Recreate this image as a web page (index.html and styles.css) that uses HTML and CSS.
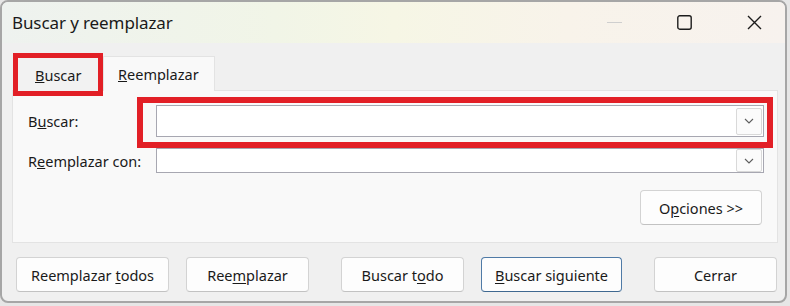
FILE: index.html
```html
<!DOCTYPE html>
<html lang="es">
<head>
  <meta charset="UTF-8">
  <title>Buscar y reemplazar</title>
  <link rel="stylesheet" href="styles.css">
</head>
<body>
  <div class="window">
    <div class="titlebar">
      <span class="title">Buscar y reemplazar</span>
      <div class="controls">
        <svg class="ctl" viewBox="0 0 15 15"><path d="M0 7.5 H15" stroke="#cfcfcf" stroke-width="1.2"/></svg>
        <svg class="ctl" viewBox="0 0 15 15"><rect x="0.8" y="0.8" width="13.4" height="13.4" rx="2" fill="none" stroke="#1c1c1c" stroke-width="1.4"/></svg>
        <svg class="ctl" viewBox="0 0 15 15"><path d="M1 1 L14 14 M14 1 L1 14" stroke="#1c1c1c" stroke-width="1.4"/></svg>
      </div>
    </div>

    <div class="content">
      <div class="tabs">
        <div class="tab tab-marked"><u>B</u>uscar</div>
        <div class="tab tab-active"><u>R</u>eemplazar</div>
      </div>

      <div class="panel">
        <div class="mark mark-find"></div>

        <div class="row row-find">
          <label class="label">B<u>u</u>scar:</label>
          <div class="combo">
            <span class="combo-btn">
              <svg viewBox="0 0 10 6"><path d="M1 1 L5 5 L9 1" fill="none" stroke="#5f5f5f" stroke-width="1.1"/></svg>
            </span>
          </div>
        </div>

        <div class="row row-replace">
          <label class="label">R<u>e</u>emplazar con:</label>
          <div class="combo combo-small">
            <span class="combo-btn">
              <svg viewBox="0 0 10 6"><path d="M1 1 L5 5 L9 1" fill="none" stroke="#5f5f5f" stroke-width="1.1"/></svg>
            </span>
          </div>
        </div>

        <div class="options-row">
          <button class="btn btn-options">O<u>p</u>ciones &gt;&gt;</button>
        </div>
      </div>

      <div class="actions">
        <button class="btn btn-wide">Reemplazar <u>t</u>odos</button>
        <button class="btn">Ree<u>m</u>plazar</button>
        <button class="btn btn-far">Buscar t<u>o</u>do</button>
        <button class="btn btn-default"><u>B</u>uscar siguiente</button>
        <button class="btn btn-far">Cerrar</button>
      </div>
    </div>
  </div>
</body>
</html>
```

FILE: styles.css
```css
body {
  margin: 0;
  background-color: #e6e6e6;
  font-family: "Noto Sans", "Open Sans", sans-serif;
  color: #1a1a1a;
}

.window {
  box-sizing: border-box;
  width: 787px;
  height: 303px;
  border: 2px solid #a6a6a6;
  border-radius: 8px;
  overflow: hidden;
  background-color: #f0f0f0;
}

/* barra de titulo */
.titlebar {
  height: 41px;
  display: flex;
  align-items: center;
  justify-content: space-between;
  padding-left: 10px;
  background: linear-gradient(90deg, #eef2ef 0%, #f1f5e7 35%, #f6f6e5 50%, #f8f3ea 72%, #f7f2ee 100%);
}
.title {
  font-size: 17px;
  letter-spacing: -0.1px;
}
.controls {
  display: flex;
  align-items: center;
  padding-right: 23px;
}
.ctl {
  width: 15px;
  height: 15px;
  margin-left: 55px;
}

.content {
  padding-top: 13px;
  font-size: 14.5px;
}

/* pestañas */
.tabs {
  display: flex;
  align-items: flex-end;
  padding-left: 16px;
  position: relative;
  z-index: 2;
  margin-bottom: -1px;
}
.tab {
  box-sizing: border-box;
  display: flex;
  align-items: center;
}
.tab-marked {
  width: 80px;
  height: 33px;
  padding-left: 17px;
  background-color: #f2f2f2;
  outline: 5px solid #e21f26;
  margin-right: 5px;
}
.tab-active {
  width: 112px;
  height: 35px;
  padding-left: 14px;
  background-color: #f9f9f9;
  border: 1px solid #e3e3e3;
  border-bottom: none;
}

.panel {
  position: relative;
  box-sizing: border-box;
  width: 766px;
  height: 153px;
  margin-left: 10px;
  padding: 14px 13px 0 15px;
  background-color: #f9f9f9;
  border: 1px solid #e3e3e3;
}

/* recuadro rojo de anotacion */
.mark {
  position: absolute;
  box-sizing: border-box;
  border: 6px solid #e21f26;
}
.mark-find {
  left: 124px;
  top: 6px;
  width: 636px;
  height: 51px;
}

.row {
  display: flex;
  align-items: center;
}
.row-replace {
  margin-top: 11px;
}
.label {
  width: 128px;
}
.combo {
  position: relative;
  box-sizing: border-box;
  flex: 1;
  height: 32px;
  background-color: #fff;
  border: 1px solid #a7a7b1;
  display: flex;
  justify-content: flex-end;
  align-items: center;
  padding-right: 1px;
}
.combo-small {
  height: 25px;
}
.combo-btn {
  box-sizing: border-box;
  width: 26px;
  height: 27px;
  border: 1px solid #d9d9d9;
  border-radius: 2px;
  background-color: #fbfbfb;
  display: flex;
  align-items: center;
  justify-content: center;
}
.combo-small .combo-btn {
  height: 23px;
}
.combo-btn svg {
  width: 10px;
  height: 6px;
}

.options-row {
  display: flex;
  justify-content: flex-end;
  margin-top: 17px;
  padding-right: 2px;
}

/* botones */
.btn {
  box-sizing: border-box;
  height: 35px;
  width: 123px;
  font-family: inherit;
  font-size: 14.5px;
  color: #1a1a1a;
  background-color: #fdfdfd;
  border: 1px solid #d3d3d3;
  border-bottom-color: #c2c2c2;
  border-radius: 4px;
  padding: 0;
}
.btn u {
  text-underline-offset: 2px;
}
.btn-options {
  width: 122px;
}

.actions {
  display: flex;
  gap: 17px;
  margin-top: 14px;
  padding-left: 14px;
}
.btn-wide {
  width: 153px;
}
.btn-far {
  margin-left: 15px;
}
.btn-default {
  width: 141px;
  border-color: #4f7aa6;
  border-bottom-color: #3f6890;
}
```
